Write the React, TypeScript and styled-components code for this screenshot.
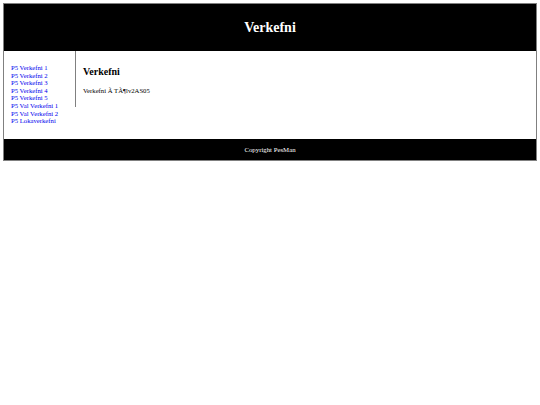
import React from 'react';
import styled, { createGlobalStyle } from 'styled-components';

const GlobalStyle = createGlobalStyle`
  body {
    margin: 3px;
    background: #fff;
    font-family: "Liberation Serif", "Times New Roman", serif;
  }
`;

const Container = styled.div`
  border: 1px solid gray;
`;

const Header = styled.header`
  background: #000;
  color: #fff;
  height: 47px;
  display: flex;
  align-items: center;
  justify-content: center;
`;

const Title = styled.h1`
  margin: 0;
  font-size: 14px;
  font-weight: bold;
`;

const Body = styled.div`
  display: flex;
  align-items: flex-start;
  height: 88px;
`;

const Nav = styled.nav`
  width: 64px;
  padding: 13px 0 0 7px;
`;

const NavList = styled.ul`
  list-style: none;
  margin: 0;
  padding: 0;
`;

const NavLink = styled.a`
  display: block;
  color: #0000ee;
  text-decoration: none;
  font-size: 6.7px;
  line-height: 7.6px;
  white-space: nowrap;
`;

const Article = styled.article`
  flex: 1;
  border-left: 1px solid gray;
  padding: 15px 7px 0;
  height: 41px;
`;

const ArticleTitle = styled.h2`
  margin: 0 0 9px;
  font-size: 10px;
  line-height: 12px;
  font-weight: bold;
`;

const ArticleText = styled.p`
  margin: 0;
  font-size: 6.7px;
  line-height: 8px;
`;

const Footer = styled.footer`
  background: #000;
  color: #fff;
  height: 21px;
  display: flex;
  align-items: center;
  justify-content: center;
  font-size: 6.8px;
`;

const links = [
  'P5 Verkefni 1',
  'P5 Verkefni 2',
  'P5 Verkefni 3',
  'P5 Verkefni 4',
  'P5 Verkefni 5',
  'P5 Val Verkefni 1',
  'P5 Val Verkefni 2',
  'P5 Lokaverkefni',
];

const App = () => (
  <>
    <GlobalStyle />
    <Container>
      <Header>
        <Title>Verkefni</Title>
      </Header>
      <Body>
        <Nav>
          <NavList>
            {links.map((l) => (
              <li key={l}>
                <NavLink href="#">{l}</NavLink>
              </li>
            ))}
          </NavList>
        </Nav>
        <Article>
          <ArticleTitle>Verkefni</ArticleTitle>
          <ArticleText>Verkefni Ã TÃ¶lv2AS05</ArticleText>
        </Article>
      </Body>
      <Footer>Copyright PesMan</Footer>
    </Container>
  </>
);

export default App;
